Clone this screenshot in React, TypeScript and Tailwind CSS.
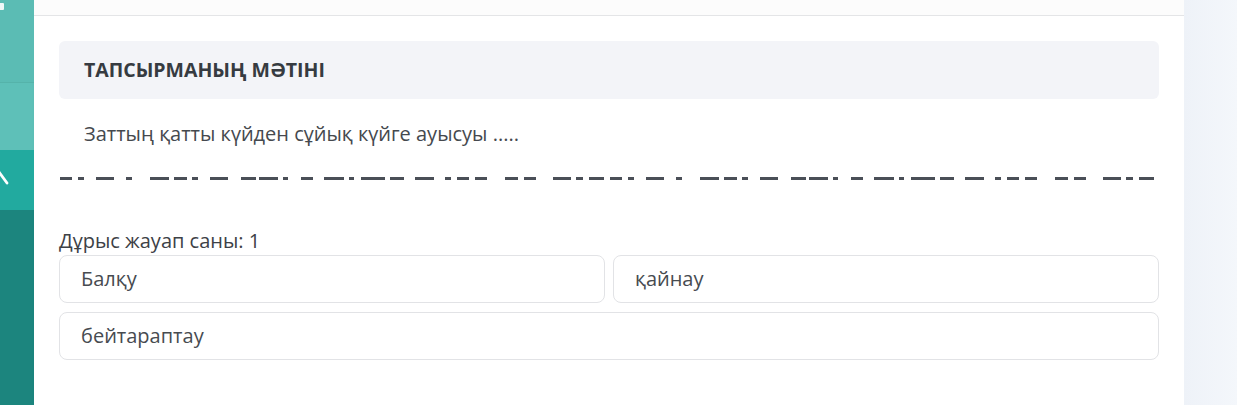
import React from 'react';

// dash segments [start, end] relative to the left edge of one half of the masked line
const SEGMENTS: [number, number][] = [
  [1, 13], [19, 25], [37, 55], [67, 73], [91, 110], [115, 128], [133, 139], [151, 169],
  [182, 197], [200, 219], [224, 229], [242, 254], [265, 285], [290, 295], [302, 326],
  [331, 345], [356, 375], [386, 392], [398, 410], [416, 428], [446, 459], [465, 477],
  [494, 512], [517, 524], [530, 545],
];

const MaskedLine: React.FC = () => (
  <svg width="1100" height="6" viewBox="0 0 1100 6" className="block">
    {[0, 550].map((offset) =>
      SEGMENTS.map(([a, b], i) => (
        <rect key={`${offset}-${i}`} x={offset + a} y={1} width={b - a} height={3} fill="#4a4f57" />
      ))
    )}
  </svg>
);

const Sidebar: React.FC = () => (
  <div className="w-[34px] shrink-0 flex flex-col">
    <div className="relative h-[83px] bg-[#5bbcb4] border-b border-[#55b3aa]">
      <div className="absolute left-0 top-[3px] w-[4px] h-[7px] bg-white/90 rounded-r-[1px]" />
    </div>
    <div className="h-[67px] bg-[#5ec0b8]" />
    <div className="relative h-[60px] bg-[#22aa9f]">
      <svg width="12" height="20" viewBox="0 0 12 20" className="absolute left-0 top-[20px]">
        <path d="M-1 2 L7 13" stroke="#ffffff" strokeWidth="2.8" strokeLinecap="round" />
      </svg>
    </div>
    <div className="flex-1 bg-[#1c857e]" />
  </div>
);

const Option: React.FC<{ label: string }> = ({ label }) => (
  <div className="h-[48px] flex items-center px-[21px] border border-[#e2e3e6] rounded-[8px] text-[20px] text-[#474b50]">
    {label}
  </div>
);

export default function App() {
  return (
    <div className="flex w-[1237px] h-[405px] overflow-hidden bg-[#f3f6fb]" style={{ fontFamily: '"Open Sans", "Noto Sans", sans-serif' }}>
      <Sidebar />
      <div className="w-[1150px] shrink-0 bg-white shadow-[2px_0_6px_rgba(0,0,0,0.04)]">
        <div className="h-[16px] bg-[#fcfcfc] border-b border-[#e4e5e7]" />
        <div className="px-[25px] pt-[25px]">
          <div className="h-[58px] flex items-center px-[25px] bg-[#f3f4f8] rounded-[6px] text-[19.5px] font-bold text-[#363b41]">
            ТАПСЫРМАНЫҢ МӘТІНІ
          </div>
          <p className="mt-[20px] pl-[25px] text-[20px] leading-[30px] text-[#45494e]">
            Заттың қатты күйден сұйық күйге ауысуы .....
          </p>
          <div className="mt-[27px]">
            <MaskedLine />
          </div>
          <p className="mt-[45px] text-[20px] leading-[28px] text-[#3d4146]">Дұрыс жауап саны: 1</p>
          <div className="grid grid-cols-2 gap-x-[8px] gap-y-[9px]">
            <Option label="Балқу" />
            <Option label="қайнау" />
            <div className="col-span-2">
              <Option label="бейтараптау" />
            </div>
          </div>
        </div>
      </div>
      <div className="flex-1 bg-gradient-to-r from-[#eef2f8] to-[#f4f7fb]" />
    </div>
  );
}
